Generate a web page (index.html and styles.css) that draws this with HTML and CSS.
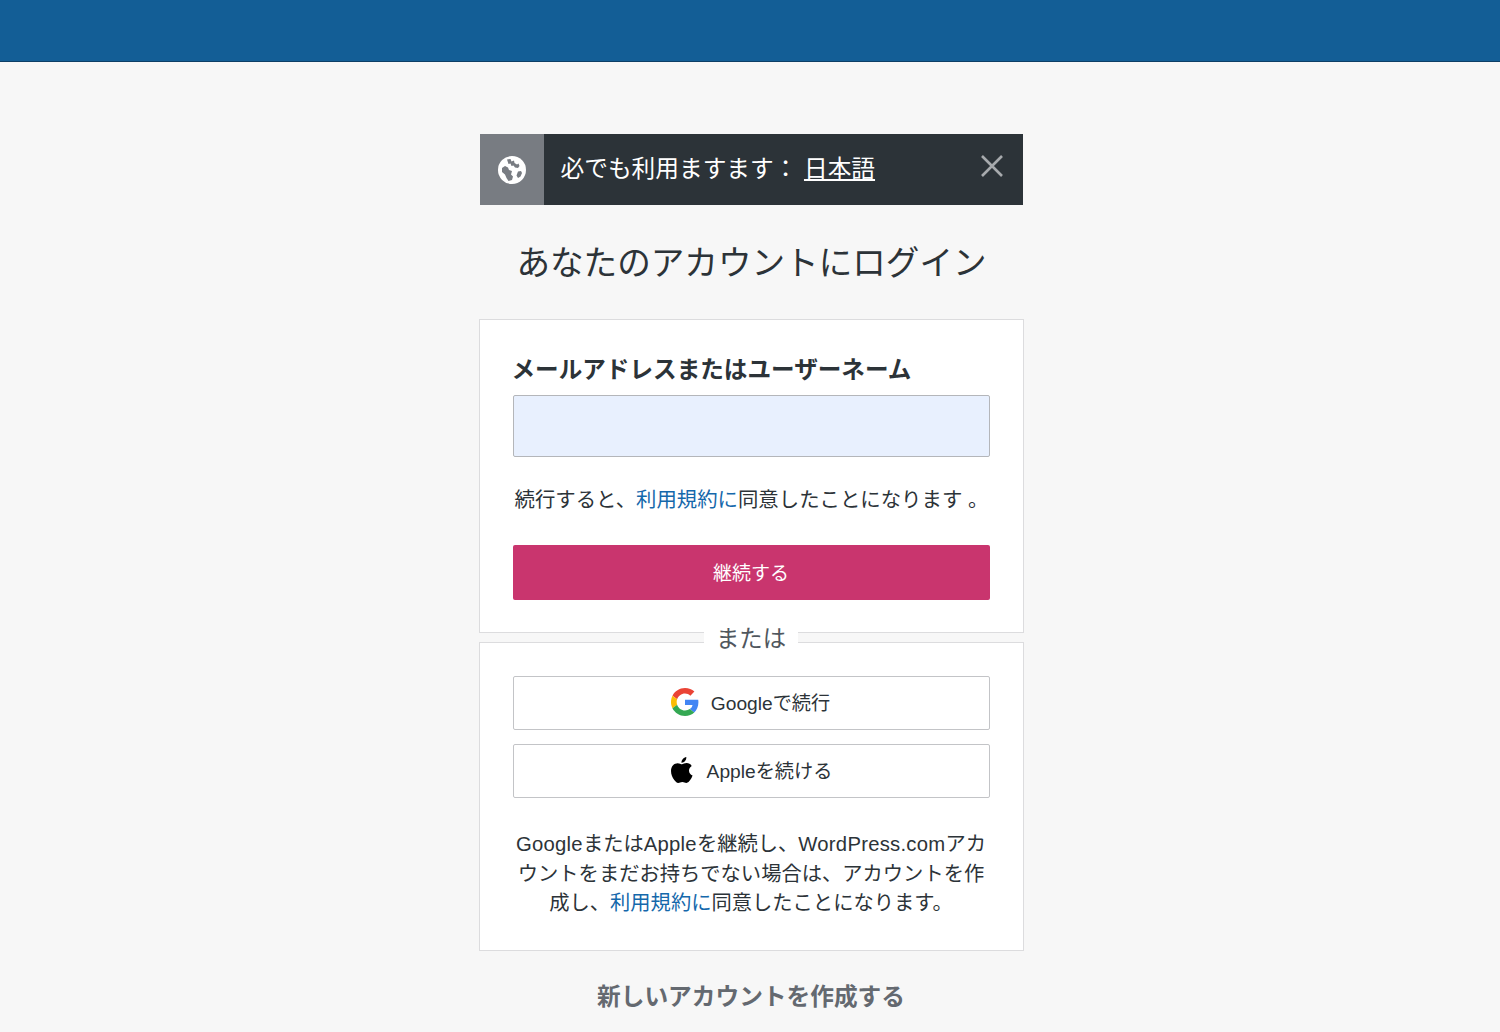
FILE: index.html
```html
<!DOCTYPE html>
<html lang="ja">
<head>
  <meta charset="UTF-8" />
  <title>ログイン</title>
  <link rel="stylesheet" href="styles.css">
</head>
<body>
  <div class="masterbar"></div>
  <main class="wrap">
    <div class="notice">
      <div class="notice-icon">
        <svg width="28" height="28" viewBox="0 0 28 28">
          <circle cx="14" cy="14" r="14" fill="#fff"/>
          <path fill="#787c82" d="M9 3.500l3.500-.5 1 2.500 2.500-1 .5 2.500 2.500 1.500 1.500-1 1 2.500-1.500 2-3-.5-1.500-2-2 .5-1-2.500-2 .5zM4 12l3-2 3 1.500 1 2.500 3 1-1 3.500 2 2-1 3.500-3.500 1-2-3-1.500-3.500-3-2.500zM20 15.500l3-.5 1 2-1.500 3.500-2.500 1.500-1.500-2.500z"/>
        </svg>
      </div>
      <div class="notice-body">
        <span class="notice-text">必でも利用ますます： <a href="#" class="notice-link">日本語</a></span>
        <svg class="notice-close" width="28" height="28" viewBox="0 0 28 28"><path d="M4 4l20 20M24 4L4 24" stroke="#a7aaad" stroke-width="2.600" fill="none"/></svg>
      </div>
    </div>

    <h1 class="heading">あなたのアカウントにログイン</h1>

    <section class="card card-form">
      <label class="field-label" for="login">メールアドレスまたはユーザーネーム</label>
      <input class="field-input" id="login" type="text" />
      <p class="tos">続行すると、<a href="#">利用規約に</a>同意したことになります 。</p>
      <button class="btn-primary">継続する</button>
    </section>

    <div class="divider"><span>または</span></div>

    <section class="card card-social">
      <button class="btn-social">
        <svg width="28" height="28" viewBox="0 0 48 48"><path fill="#EA4335" d="M24 9.500c3.500 0 6.700 1.200 9.200 3.600l6.900-6.900C35.900 2.400 30.500 0 24 0 14.600 0 6.500 5.400 2.600 13.200l8 6.200C12.400 13.700 17.700 9.500 24 9.500z"/><path fill="#4285F4" d="M47 24.500c0-1.600-.1-3.100-.4-4.500H24v9h12.900c-.6 3-2.200 5.500-4.800 7.200l7.700 6C44.300 38 47 31.800 47 24.500z"/><path fill="#FBBC05" d="M10.500 28.600c-.5-1.500-.8-3-.8-4.600s.3-3.100.8-4.600l-8-6.200C.9 16.500 0 20.100 0 24s.9 7.500 2.600 10.800l7.900-6.200z"/><path fill="#34A853" d="M24 48c6.500 0 11.900-2.100 15.900-5.800l-7.700-6c-2.200 1.400-4.900 2.300-8.200 2.300-6.300 0-11.600-4.200-13.500-9.900l-8 6.200C6.500 42.600 14.600 48 24 48z"/></svg>
        <span>Googleで続行</span>
      </button>
      <button class="btn-social">
        <svg width="26" height="28" viewBox="0 0 24 26"><path fill="#000" d="M16 1c.1 1.500-.4 2.700-1.200 3.700-.9 1-2 1.700-3.300 1.600-.1-1.300.5-2.600 1.300-3.500C13.600 1.900 14.800 1.200 16 1zM21 9.200c-1.500 1-2.500 2.400-2.500 4.300 0 2.200 1.300 3.800 3.300 4.600-.5 1.500-1.300 3-2.200 4.300-1 1.300-1.900 2.600-3.500 2.600-1.500 0-2-.9-3.800-.9s-2.400.9-3.800.9c-1.500 0-2.600-1.400-3.700-2.800C3 20.300 1.800 17 1.800 14c0-4.800 3.100-7.300 6.200-7.300 1.600 0 3 1 4 1s2.500-1.100 4.300-1.100c1.900 0 3.600.9 4.700 2.600z"/></svg>
        <span>Appleを続ける</span>
      </button>
      <p class="social-tos"><span class="latin">Google</span>または<span class="latin">Apple</span>を継続し、<span class="latin">WordPress.com</span>アカウントをまだお持ちでない場合は、アカウントを作成し、<a href="#">利用規約に</a>同意したことになります。</p>
    </section>

    <a class="create-link" href="#">新しいアカウントを作成する</a>
  </main>
</body>
</html>
```

FILE: styles.css
```css
* {
  box-sizing: border-box;
}

html, body {
  height: 100%;
}

body {
  margin: 0;
  background: #f7f7f7;
  color: #2c3338;
  font-family: "Liberation Sans", "Noto Sans CJK JP", sans-serif;
  overflow: hidden;
}

a {
  color: #1568ab;
  text-decoration: none;
}

.masterbar {
  height: 62px;
  background: #135e96;
  border-bottom: 1px solid #0d3f66;
}

.wrap {
  width: 545px;
  margin: 72px auto 0;
  padding-left: 1px;
  transform: translateX(1px);
}

.notice {
  display: flex;
  width: 543px;
  height: 71px;
  background: #2c3338;
  color: #fff;
}

.notice-icon {
  width: 64px;
  background: #787c82;
  display: flex;
  align-items: center;
  justify-content: center;
}

.notice-body {
  flex: 1;
  display: flex;
  align-items: center;
  justify-content: space-between;
  padding: 0 17px;
  font-size: 23.700px;
}

.notice-text {
  padding-bottom: 5px;
}

.notice-link {
  color: #fff;
  text-decoration: underline;
}

.notice-close {
  margin-top: -8px;
}

.heading {
  margin: 38px 0 34px;
  font-size: 33.600px;
  font-weight: 400;
  line-height: 42px;
  text-align: center;
}

.card {
  margin-left: -1px;
  width: 545px;
  background: #fff;
  border: 1px solid #dcdcde;
  padding: 0 33px;
}

.card-form {
  height: 314px;
  padding-top: 33px;
}

.field-label {
  display: block;
  font-size: 23.600px;
  font-weight: 700;
  line-height: 34px;
  margin-left: -1px;
  color: #2c3338;
}

.field-input {
  display: block;
  width: 100%;
  height: 62px;
  margin-top: 8px;
  background: #e8f0fe;
  border: 1px solid #b4b6ba;
  border-radius: 2px;
}

.tos {
  margin: 28px 0 30px 2px;
  font-size: 20.400px;
  line-height: 30px;
  white-space: nowrap;
}

.btn-primary {
  display: block;
  width: 100%;
  height: 55px;
  padding-bottom: 4px;
  background: #c9356e;
  color: #fff;
  border: 0;
  border-radius: 2px;
  font: inherit;
  font-size: 19px;
}

.divider {
  position: relative;
  height: 9px;
  margin-left: -1px;
  width: 545px;
  display: flex;
  justify-content: center;
}

.divider span {
  position: absolute;
  z-index: 1;
  top: -9px;
  padding: 0 12px;
  font-size: 23.400px;
  line-height: 30px;
  color: #50575e;
}

.divider span::before {
  content: "";
  position: absolute;
  z-index: -1;
  left: 0;
  right: 0;
  top: 7px;
  height: 14px;
  background: #fff;
}

.card-social {
  height: 309px;
  padding-top: 33px;
}

.btn-social {
  display: flex;
  align-items: center;
  justify-content: center;
  gap: 12px;
  width: 100%;
  height: 54px;
  margin-bottom: 14px;
  padding: 0 1px 0 0;
  background: #fff;
  border: 1px solid #c3c4c7;
  border-radius: 2px;
  font: inherit;
  font-size: 19.200px;
  color: #2c3338;
}

.btn-social svg {
  margin-bottom: 2px;
}

.btn-social span {
  padding-bottom: 3px;
}

.social-tos {
  margin: 32px 0 0;
  font-size: 20.300px;
  line-height: 29.500px;
  text-align: center;
  color: #2c3338;
}

.latin {
  letter-spacing: 0.250px;
}

.create-link {
  display: block;
  margin-left: -1px;
  width: 545px;
  margin-top: 29px;
  font-size: 23.700px;
  font-weight: 700;
  line-height: 34px;
  text-align: center;
  color: #646970;
}
```
